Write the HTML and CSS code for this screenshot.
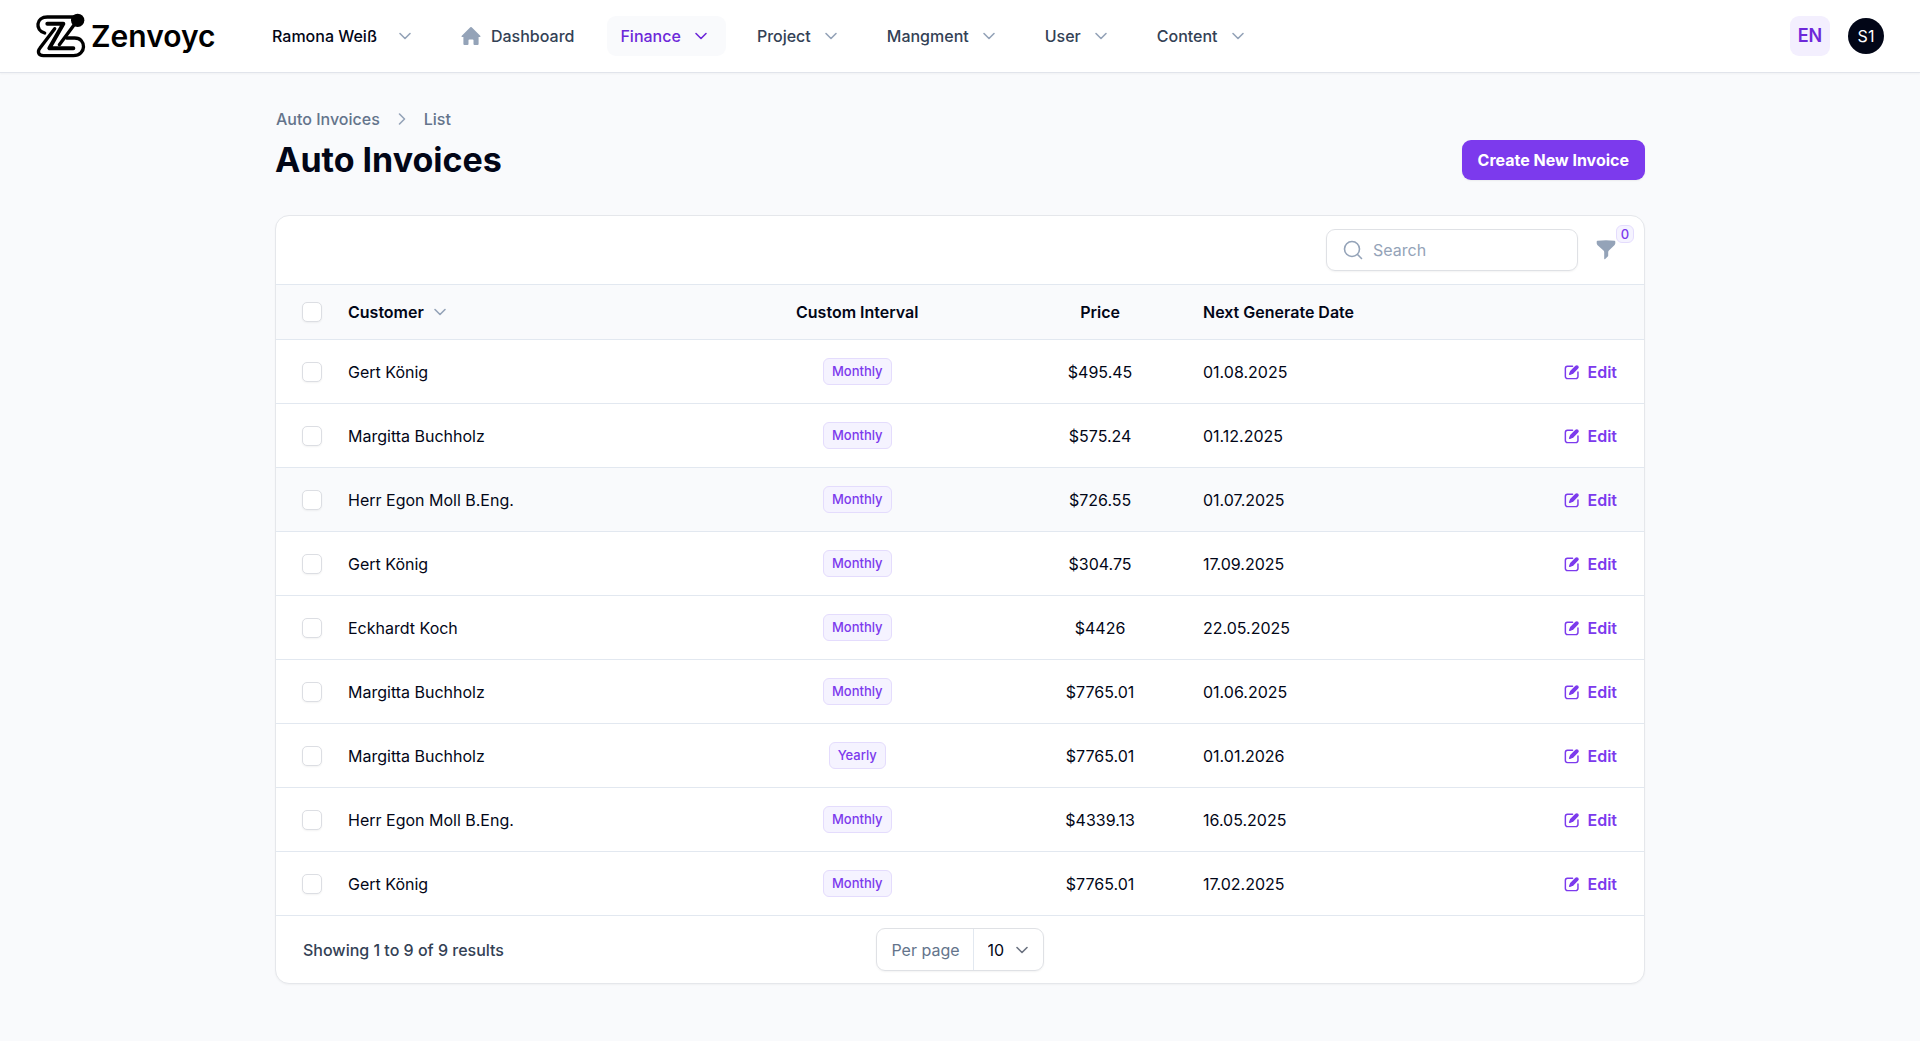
FILE: index.html
```html
<!DOCTYPE html>
<html lang="en">
<head>
<meta charset="utf-8">
<meta name="viewport" content="width=device-width, initial-scale=1">
<title>Auto Invoices - Zenvoyc</title>
<link rel="stylesheet" href="styles.css">
</head>
<body>
<svg class="sprite" aria-hidden="true">
  <symbol id="chevron" viewBox="0 0 20 20"><path d="M5 7.500l5 5 5-5" fill="none" stroke="currentColor" stroke-width="1.600" stroke-linecap="round" stroke-linejoin="round"/></symbol>
  <symbol id="pencil" viewBox="0 0 16 16"><path d="M13.488 2.513a1.750 1.750 0 0 0-2.475 0L6.750 6.774a2.750 2.750 0 0 0-.596.892l-.848 2.047a.750.750 0 0 0 .980.980l2.047-.848a2.750 2.750 0 0 0 .892-.596l4.261-4.262a1.750 1.750 0 0 0 0-2.474Z" fill="currentColor"/><path d="M8.500 2.900H4A2 2 0 0 0 2.100 4.900V12A2 2 0 0 0 4.100 13.900H11.300A2 2 0 0 0 13.300 12V8" fill="none" stroke="currentColor" stroke-width="1.300" stroke-linecap="round"/></symbol>
</svg>

<header class="topbar">
  <a class="logo" href="#">
    <svg class="logo-mark" viewBox="0 0 162 144" aria-hidden="true">
      <g fill="none" stroke="#000" stroke-width="10" stroke-linecap="round" stroke-linejoin="round">
        <path d="M32 63C2 54 6 15 40 15H125"/>
        <path d="M124 34L76 98"/>
        <path d="M98 78H122C158 78 158 131 118 131H28C12 131 10 118 18 108L62 50"/>
        <path d="M40 35H88L46 109H118" stroke-width="12"/>
      </g>
      <circle cx="131" cy="25" r="20"/>
    </svg>
    <span>Zenvoyc</span>
  </a>
  <nav class="nav" aria-label="Main">
    <button class="nav-item team" type="button">Ramona Weiß <svg><use href="#chevron"/></svg></button>
    <a class="nav-item" href="#"><svg viewBox="0 0 20 20"><path d="M9.300 1.300a1 1 0 0 1 1.400 0l8.500 8.400c.6.600.2 1.400-.6 1.400h-1V18a1 1 0 0 1-1 1h-3.100a1 1 0 0 1-1-1v-3.700a.8.8 0 0 0-.8-.8H8.300a.8.8 0 0 0-.8.8V18a1 1 0 0 1-1 1H3.400a1 1 0 0 1-1-1v-6.900h-1c-.8 0-1.200-.8-.6-1.400z" fill="currentColor"/></svg>Dashboard</a>
    <button class="nav-item active" type="button">Finance <svg><use href="#chevron"/></svg></button>
    <button class="nav-item" type="button">Project <svg><use href="#chevron"/></svg></button>
    <button class="nav-item" type="button">Mangment <svg><use href="#chevron"/></svg></button>
    <button class="nav-item" type="button">User <svg><use href="#chevron"/></svg></button>
    <button class="nav-item" type="button">Content <svg><use href="#chevron"/></svg></button>
  </nav>
  <button class="lang" type="button">EN</button>
  <button class="avatar" type="button">S1</button>
</header>

<main class="page">
  <nav class="crumbs" aria-label="Breadcrumb"><a href="#">Auto Invoices</a><svg><use href="#chevron"/></svg><a href="#">List</a></nav>
  <div class="heading"><h1>Auto Invoices</h1><button class="create" type="button">Create New Invoice</button></div>

  <section class="card">
    <div class="toolbar">
      <label class="search">
        <svg viewBox="0 0 20 20" aria-hidden="true"><circle cx="9" cy="9" r="7.500"/><path d="M14.500 14.500L18.500 18.500"/></svg>
        <input type="search" placeholder="Search" aria-label="Search">
      </label>
      <button class="filter" type="button" aria-label="Filter">
        <svg viewBox="0 0 20 20" aria-hidden="true"><path d="M1.500 .8Q10 -.3 18.500 .8q.8.100.8.900v1.500q0 1.200-.9 2.100l-5.500 5.300q-.7.700-.7 1.600v3.300q0 .8-.7 1.300l-2.300 2.200q-1 .7-1-.4v-6.400q0-.9-.7-1.600L1.600 5.300Q.7 4.400.7 3.200V1.700q0-.8.8-.9z" fill="currentColor"/></svg>
        <span class="count">0</span>
      </button>
    </div>

    <table class="table">
      <colgroup><col class="c-check"><col class="c-customer"><col class="c-interval"><col class="c-price"><col class="c-date"><col></colgroup>
      <thead>
        <tr><th><input type="checkbox" aria-label="Select all"></th><th><button class="sort" type="button">Customer <svg><use href="#chevron"/></svg></button></th><th class="center">Custom Interval</th><th class="center">Price</th><th>Next Generate Date</th><th aria-label="Actions"></th></tr>
      </thead>
      <tbody>
        <tr><td><input type="checkbox" aria-label="Select row"></td><td>Gert König</td><td class="center"><span class="badge">Monthly</span></td><td class="center">$495.45</td><td>01.08.2025</td><td><a class="edit" href="#"><svg><use href="#pencil"/></svg>Edit</a></td></tr>
        <tr><td><input type="checkbox" aria-label="Select row"></td><td>Margitta Buchholz</td><td class="center"><span class="badge">Monthly</span></td><td class="center">$575.24</td><td>01.12.2025</td><td><a class="edit" href="#"><svg><use href="#pencil"/></svg>Edit</a></td></tr>
        <tr class="hovered"><td><input type="checkbox" aria-label="Select row"></td><td>Herr Egon Moll B.Eng.</td><td class="center"><span class="badge">Monthly</span></td><td class="center">$726.55</td><td>01.07.2025</td><td><a class="edit" href="#"><svg><use href="#pencil"/></svg>Edit</a></td></tr>
        <tr><td><input type="checkbox" aria-label="Select row"></td><td>Gert König</td><td class="center"><span class="badge">Monthly</span></td><td class="center">$304.75</td><td>17.09.2025</td><td><a class="edit" href="#"><svg><use href="#pencil"/></svg>Edit</a></td></tr>
        <tr><td><input type="checkbox" aria-label="Select row"></td><td>Eckhardt Koch</td><td class="center"><span class="badge">Monthly</span></td><td class="center">$4426</td><td>22.05.2025</td><td><a class="edit" href="#"><svg><use href="#pencil"/></svg>Edit</a></td></tr>
        <tr><td><input type="checkbox" aria-label="Select row"></td><td>Margitta Buchholz</td><td class="center"><span class="badge">Monthly</span></td><td class="center">$7765.01</td><td>01.06.2025</td><td><a class="edit" href="#"><svg><use href="#pencil"/></svg>Edit</a></td></tr>
        <tr><td><input type="checkbox" aria-label="Select row"></td><td>Margitta Buchholz</td><td class="center"><span class="badge">Yearly</span></td><td class="center">$7765.01</td><td>01.01.2026</td><td><a class="edit" href="#"><svg><use href="#pencil"/></svg>Edit</a></td></tr>
        <tr><td><input type="checkbox" aria-label="Select row"></td><td>Herr Egon Moll B.Eng.</td><td class="center"><span class="badge">Monthly</span></td><td class="center">$4339.13</td><td>16.05.2025</td><td><a class="edit" href="#"><svg><use href="#pencil"/></svg>Edit</a></td></tr>
        <tr><td><input type="checkbox" aria-label="Select row"></td><td>Gert König</td><td class="center"><span class="badge">Monthly</span></td><td class="center">$7765.01</td><td>17.02.2025</td><td><a class="edit" href="#"><svg><use href="#pencil"/></svg>Edit</a></td></tr>
      </tbody>
    </table>

    <div class="footer">
      <span class="summary">Showing 1 to 9 of 9 results</span>
      <div class="per-page">
        <label for="per-page">Per page</label>
        <span class="select"><select id="per-page"><option>5</option><option selected>10</option><option>25</option></select><svg><use href="#chevron"/></svg></span>
      </div>
    </div>
  </section>
</main>
</body>
</html>
```
FILE: styles.css
```css
* { box-sizing: border-box; }

body {
  margin: 0;
  background: #f9fafc;
  color: #020617;
  font: 16px/24px Inter, "Noto Sans", sans-serif;
}

button, input, select { font: inherit; color: inherit; }
button { border: 0; padding: 0; background: none; cursor: pointer; white-space: nowrap; }
a { color: inherit; text-decoration: none; }
svg { width: 20px; height: 20px; flex: none; }
.sprite { display: none; }

/* Top bar */
.topbar {
  display: flex;
  align-items: center;
  height: 73px;
  padding: 0 36px;
  background: #fff;
  border-bottom: 1px solid #e1e4eb;
  box-shadow: 0 1px 2px rgb(0 0 0 / 4%);
}
.logo { display: flex; align-items: center; gap: 3px; width: 223px; color: #000; font-size: 30px; font-weight: 600; line-height: 40px; }
.logo-mark { width: 54px; height: 48px; margin-left: -2px; }
.nav { display: flex; flex: 1; gap: 18px; }
.nav-item {
  display: flex;
  align-items: center;
  gap: 10px;
  height: 40px;
  padding: 0 15px 0 13px;
  border-radius: 9px;
  color: #334155;
  font-weight: 500;
}
.nav-item svg { color: #94a3b8; }
.team { gap: 18px; color: #020617; }
.active { background: #f9fafc; color: #6d28d9; }
.active svg { color: inherit; }
.lang { width: 40px; height: 40px; margin-right: 18px; border-radius: 9px; background: #f3effe; color: #6d28d9; font-size: 18px; font-weight: 600; }
.avatar { width: 36px; height: 36px; border-radius: 50%; background: #020617; color: #fff; }

/* Page heading */
.page { max-width: 1370px; margin: 0 auto; padding: 34px 0 57px; }
.crumbs { display: flex; align-items: center; gap: 12px; padding-left: 1px; color: #64748b; font-weight: 500; }
.crumbs svg { color: #94a3b8; transform: rotate(-90deg); }
.heading { display: flex; align-items: center; justify-content: space-between; margin: 9px 0 35px; }
h1 { margin: 0; font-size: 34px; line-height: 40px; font-weight: 700; }
.create { height: 40px; padding: 0 16px; border-radius: 9px; background: #7c3aed; color: #fff; font-weight: 700; box-shadow: 0 1px 2px rgb(0 0 0 / 6%); }

/* Table card */
.card { overflow: hidden; border: 1px solid #e5e7eb; border-radius: 14px; background: #fff; box-shadow: 0 1px 2px rgb(0 0 0 / 4%); }
.toolbar { display: flex; align-items: center; justify-content: flex-end; gap: 18px; height: 68px; padding: 0 28px; }
.search { display: flex; align-items: center; gap: 10px; width: 252px; height: 42px; padding: 0 16px; border: 1px solid #dfe1e5; border-radius: 9px; box-shadow: 0 1px 2px rgb(0 0 0 / 5%); }
.search svg { fill: none; stroke: #94a3b8; stroke-width: 1.6; stroke-linecap: round; }
.search input { flex: 1; min-width: 0; border: 0; padding: 0; outline: 0; background: none; }
.search input::placeholder { color: #94a3b8; }
.filter { position: relative; display: flex; color: #94a3b8; }
.count {
  position: absolute;
  left: 20px;
  bottom: 17px;
  width: 18px;
  height: 18px;
  border: 1px solid #e4dcfd;
  border-radius: 6px;
  background: #f5f3ff;
  color: #7c3aed;
  font-size: 13px;
  font-weight: 500;
  line-height: 16px;
}

.table { width: 100%; table-layout: fixed; border-collapse: separate; border-spacing: 0; }
.c-check { width: 58px; }
.c-customer { width: 27%; }
.c-interval { width: 22.5%; }
.c-price { width: 13%; }
.c-date { width: 20%; }
th, td { padding: 0 14px; border-top: 1px solid #e2e8f0; text-align: left; white-space: nowrap; }
th { height: 55px; background: #f9fafc; font-weight: 600; }
td { height: 64px; }
th:first-child, td:first-child { padding: 0 0 0 26px; }
th:last-child, td:last-child { padding-right: 27px; }
th.center, td.center { text-align: center; }
.hovered { background: #f9fafc; }
.table input {
  appearance: none;
  display: block;
  width: 20px;
  height: 20px;
  margin: 0;
  border: 1px solid #dcdee3;
  border-radius: 5px;
  background: #fff;
  box-shadow: 0 1px 2px rgb(0 0 0 / 5%);
}
.table input:checked { background: #7c3aed; }
.sort { display: flex; align-items: center; gap: 6px; }
.sort svg { color: #94a3b8; }
.badge { display: inline-block; padding: 0 8px; border: 1px solid #e4dcfd; border-radius: 6px; background: #f5f3ff; color: #7c3aed; font-size: 13px; font-weight: 500; line-height: 25px; }
.edit { display: flex; align-items: center; justify-content: flex-end; gap: 6px; color: #7c3aed; font-weight: 600; }
.edit svg { width: 18px; height: 18px; }

/* Pagination */
.footer { display: grid; grid-template-columns: 1fr auto 1fr; align-items: center; height: 68px; padding: 0 27px; border-top: 1px solid #e2e8f0; }
.summary { color: #334155; font-weight: 500; }
.per-page { display: flex; align-items: center; height: 43px; border: 1px solid #dfe1e5; border-radius: 9px; box-shadow: 0 1px 2px rgb(0 0 0 / 5%); }
.per-page label { padding: 0 13px 0 14px; color: #64748b; }
.select { display: flex; align-items: center; height: 100%; padding-right: 11px; border-left: 1px solid #e2e8f0; }
.select select { appearance: none; width: 58px; height: 100%; margin-right: -20px; padding: 0 0 0 14px; border: 0; outline: 0; background: none; }
.select svg { color: #6b7280; pointer-events: none; }
```
